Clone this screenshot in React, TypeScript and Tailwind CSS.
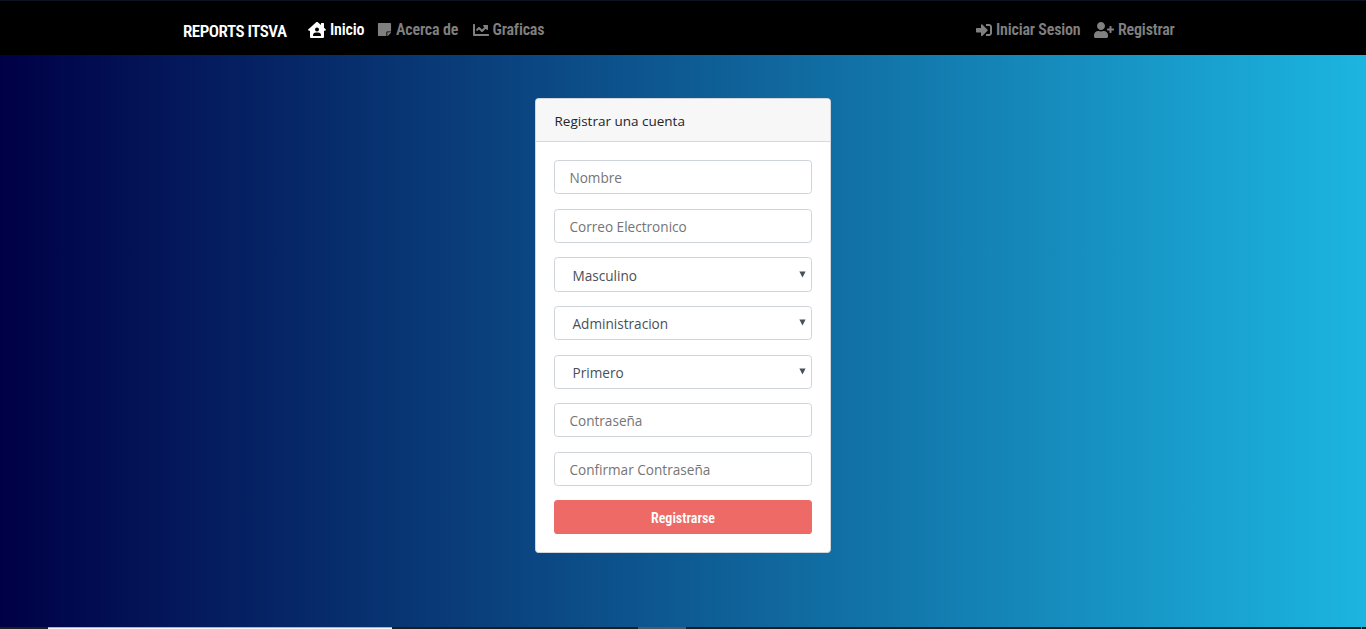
import { FaHouseUser, FaStickyNote, FaChartLine, FaSignInAlt, FaUserPlus } from "react-icons/fa";
import type { ReactNode } from "react";

const condensed = "font-['Roboto_Condensed','Liberation_Sans_Narrow','Liberation_Sans',sans-serif] font-semibold";

function NavItem({ icon, children, className = "" }: { icon: ReactNode; children: string; className?: string }) {
  return (
    <a href="#" className={`flex items-center gap-[4px] whitespace-nowrap text-[16px] leading-6 tracking-[-0.18px] ${className}`}>
      {icon}
      <span>{children}</span>
    </a>
  );
}

function TextField({ label, type = "text" }: { label: string; type?: string }) {
  return (
    <input
      type={type}
      placeholder={label}
      className="block h-[34.2px] w-full rounded-[3.6px] border border-[#ced4da] bg-white px-[14.4px] pt-px text-[13.6px] text-[#495057] placeholder:text-[#757575]"
    />
  );
}

function SelectField({ value }: { value: string }) {
  return (
    <button
      type="button"
      className="flex h-[34.2px] w-full items-center justify-between rounded-[3.6px] border border-[#ced4da] bg-white pr-[5px] pl-[17.5px] text-left text-[13.6px] text-[#495057]"
    >
      <span className="pt-[2.5px]">{value}</span>
      <svg width="7" height="7" viewBox="0 0 7 7" fill="#495057" className="mb-px">
        <path d="M0.4 0.5H6.6L3.5 6.5Z" />
      </svg>
    </button>
  );
}

export default function App() {
  return (
    <div className="flex h-[629px] w-full flex-col overflow-hidden bg-linear-to-r/srgb from-[#000046] to-[#1cb5e0] font-['Open_Sans','Noto_Sans',sans-serif]">
      <nav className={`flex h-[55px] shrink-0 border-t border-[#0b1320] bg-black pr-[182px] pl-[183px] text-[#808080] ${condensed}`}>
        <a href="#" className="mt-[18px] w-[125px] text-[17px] leading-6 tracking-[-0.5px] whitespace-nowrap text-white">
          REPORTS ITSVA
        </a>
        <div className="flex h-[58px] items-center">
          <NavItem className="w-[69px] text-white" icon={<FaHouseUser size={18} />}>Inicio</NavItem>
          <NavItem className="w-[95.5px]" icon={<FaStickyNote size={15} className="mb-px" />}>Acerca de</NavItem>
          <NavItem icon={<FaChartLine size={16} className="mb-px" />}>Graficas</NavItem>
        </div>
        <div className="ml-auto flex h-[58px] items-center">
          <NavItem className="w-[118px]" icon={<FaSignInAlt size={16} className="mb-px" />}>Iniciar Sesion</NavItem>
          <NavItem className="w-[90px]" icon={<FaUserPlus size={20} className="mb-px" />}>Registrar</NavItem>
        </div>
      </nav>
      <main className="flex flex-1 items-start justify-center pt-[42.6px]">
        <section className="h-[455px] w-[296px] rounded-[3.6px] border border-[#d2d6da] bg-white">
          <h1 className="h-[43.7px] rounded-t-[3px] border-b border-[#d6d8da] bg-[#f7f7f7] px-[18.5px] pt-[12px] text-[13.5px] leading-[21.6px] text-[#212529]">
            Registrar una cuenta
          </h1>
          <form className="flex flex-col gap-[14.4px] px-[18px] pt-[18px]" onSubmit={(e) => e.preventDefault()}>
            <TextField label="Nombre" />
            <TextField label="Correo Electronico" />
            <SelectField value="Masculino" />
            <SelectField value="Administracion" />
            <SelectField value="Primero" />
            <TextField label="Contraseña" type="password" />
            <TextField label="Confirmar Contraseña" type="password" />
            <button type="submit" className={`h-[34px] w-full rounded-[3.6px] bg-[#ed6a66] pt-[2px] text-[14px] text-white ${condensed}`}>
              Registrarse
            </button>
          </form>
        </section>
      </main>
      <footer className="flex h-[2px] shrink-0 bg-[#1d1c1f]">
        <div className="ml-[48px] w-[344px] border-t border-[#a4b0d8] bg-[#f5f5f5]" />
        <div className="ml-[246px] w-[48px] bg-[#55575c]" />
        <div className="mr-[4px] ml-auto w-px bg-[#777]" />
      </footer>
    </div>
  );
}
